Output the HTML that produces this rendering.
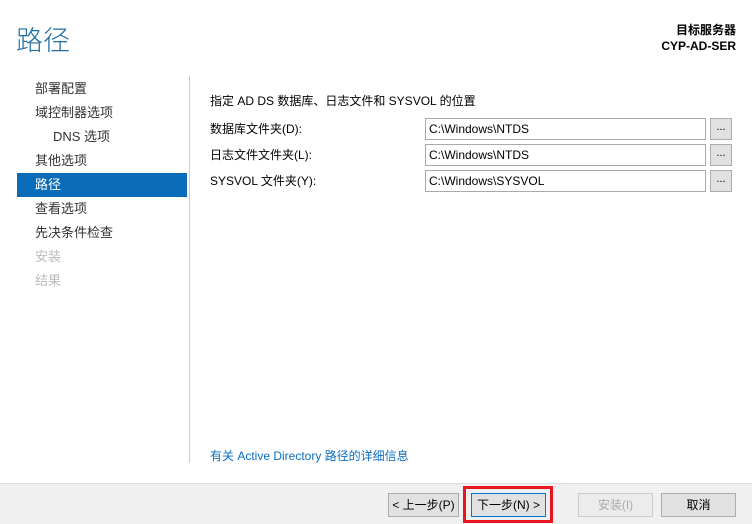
<!DOCTYPE html><html><head><meta charset="utf-8"><style>
body{margin:0;width:752px;height:523px;background:#fff;font-family:"Liberation Sans","Noto Sans CJK SC",sans-serif;font-size:12px;color:#000;position:relative;overflow:hidden}
.a{position:absolute;white-space:nowrap}
.nav{position:absolute;left:17px;width:170px;height:24px;line-height:24px;padding-left:18px;box-sizing:border-box;font-size:13px;color:#333}
.in{position:absolute;left:425px;width:281px;height:22px;border:1px solid #aaa;box-sizing:border-box;line-height:20px;padding-left:3px;font-size:12px}
.bb{position:absolute;left:710px;width:22px;height:22px;border:1px solid #adadad;background:#e1e1e1;box-sizing:border-box;text-align:center;line-height:16px;font-size:11px}
.btn{position:absolute;top:493px;height:24px;border:1px solid #adadad;background:#e1e1e1;box-sizing:border-box;text-align:center;line-height:22px;font-size:12px}
</style></head><body>
<div class="a" style="left:16px;top:19px;font-size:27px;color:#1f6fa3;font-weight:300">路径</div>
<div class="a" style="right:16px;top:22px;font-weight:bold;font-size:12px;text-align:right;line-height:16px">目标服务器<br>CYP-AD-SER</div>
<div class="nav" style="top:77px">部署配置</div>
<div class="nav" style="top:101px">域控制器选项</div>
<div class="nav" style="top:125px;padding-left:36px">DNS 选项</div>
<div class="nav" style="top:149px">其他选项</div>
<div class="nav" style="top:173px;background:#0a6cb8;color:#fff">路径</div>
<div class="nav" style="top:197px">查看选项</div>
<div class="nav" style="top:221px">先决条件检查</div>
<div class="nav" style="top:245px;color:#bbb">安装</div>
<div class="nav" style="top:269px;color:#bbb">结果</div>
<div class="a" style="left:189px;top:76px;width:1px;height:387px;background:#ccc"></div>
<div class="a" style="left:210px;top:92px">指定 AD DS 数据库、日志文件和 SYSVOL 的位置</div>
<div class="a" style="left:210px;top:120px">数据库文件夹(D):</div>
<div class="in" style="top:118px">C:\Windows\NTDS</div><div class="bb" style="top:118px">...</div>
<div class="a" style="left:210px;top:146px">日志文件文件夹(L):</div>
<div class="in" style="top:144px">C:\Windows\NTDS</div><div class="bb" style="top:144px">...</div>
<div class="a" style="left:210px;top:172px">SYSVOL 文件夹(Y):</div>
<div class="in" style="top:170px">C:\Windows\SYSVOL</div><div class="bb" style="top:170px">...</div>
<div class="a" style="left:210px;top:447px;color:#0b6ec2">有关 Active Directory 路径的详细信息</div>
<div class="a" style="left:0;top:483px;width:752px;height:40px;background:#f0f0f0;border-top:1px solid #ddd"></div>
<div class="btn" style="left:388px;width:71px">&lt; 上一步(P)</div>
<div class="a" style="left:463px;top:486px;width:90px;height:37px;border:3px solid #e8141f;box-sizing:border-box"></div>
<div class="btn" style="left:471px;width:75px;border-color:#0078d7">下一步(N) &gt;</div>
<div class="btn" style="left:578px;width:75px;color:#aaa;background:#ececec;border-color:#ccc">安装(I)</div>
<div class="btn" style="left:661px;width:75px">取消</div>
</body></html>
